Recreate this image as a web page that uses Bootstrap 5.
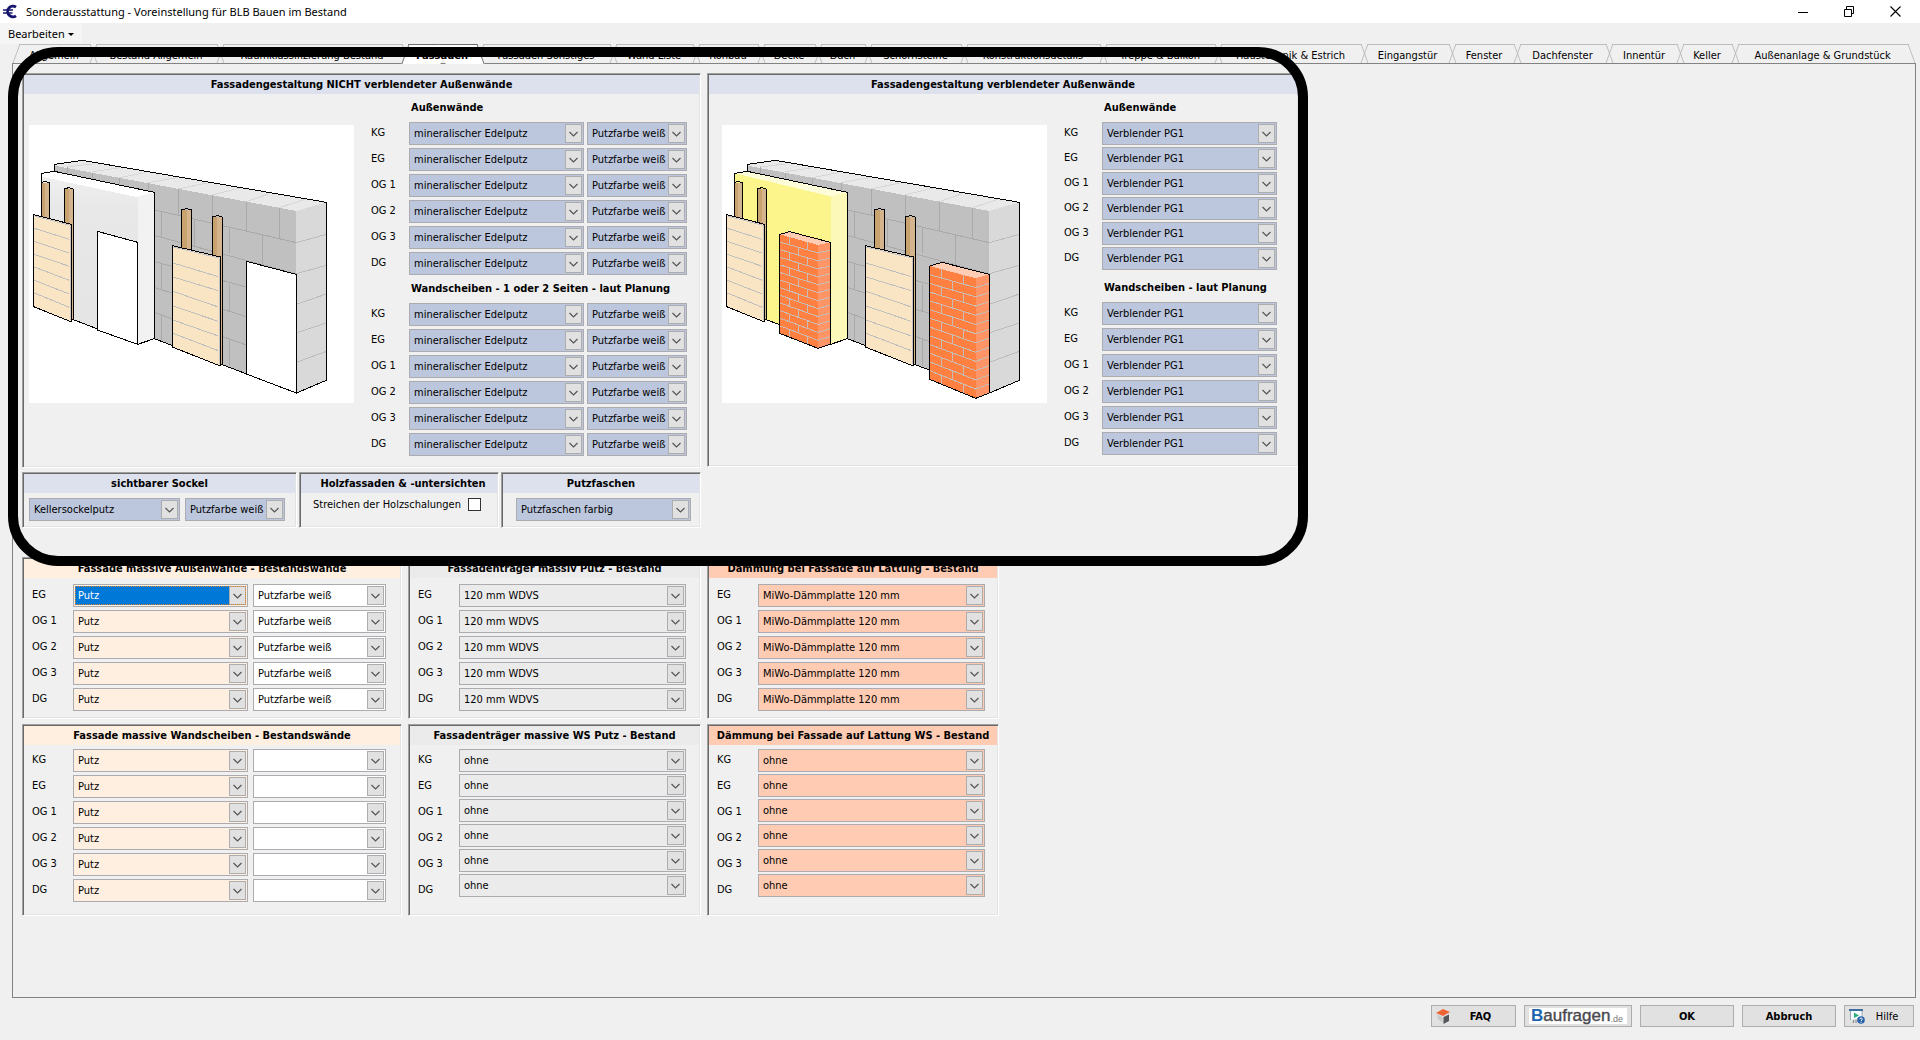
<!DOCTYPE html>
<html lang="de">
<head>
<meta charset="utf-8">
<meta name="viewport" content="width=device-width, initial-scale=1">
<title>Sonderausstattung - Voreinstellung für BLB Bauen im Bestand</title>
<link href="https://cdn.jsdelivr.net/npm/bootstrap@5.3.0/dist/css/bootstrap.min.css" rel="stylesheet">
<style>
  body { background: #f0f0f0; color: #000; font-family: "DejaVu Sans Condensed", "DejaVu Sans", sans-serif; font-size: 11px; line-height: 15px; }
  button, select, input { font: inherit; color: inherit; }
  .titlebar { height: 23px; background: #fff; font-family: "Noto Sans", sans-serif; padding: 0 2px 0 3px; }
  .win-btn { width: 46px; height: 23px; border: 0; background: none; padding: 0 0 3px; }
  .menubar { height: 21px; }
  .menu-btn { border: 0; background: #f5f5f5; height: 21px; padding: 0 8px; font-family: "Noto Sans", sans-serif; }
  .menu-btn::after { margin-left: 3px; border-width: 3px; vertical-align: 2px; }

  .tab-strip { display: grid; height: 19px; margin: 0 5px 0 20px;
    grid-template-columns: 77fr 127fr 185fr 75fr 133fr 83fr 65fr 57fr 50fr 96fr 139fr 115fr 146fr 88fr 65fr 92fr 71fr 55fr 176fr; }
  .tab-btn { position: relative; isolation: isolate; min-width: 0; border: 0; background: none; height: 19px; padding: 3px 9px 0 0; white-space: nowrap; display: flex; justify-content: center; align-items: center; }
  .tab-btn::before, .tab-btn::after { content: ""; position: absolute; z-index: -1; top: 0; bottom: 0; width: 52%; border: 0 solid #bdbdbd; border-top-width: 1px; }
  .tab-btn::before { left: -4px; border-left-width: 1px; transform: skewX(-20deg); }
  .tab-btn::after { right: 3px; border-right-width: 1px; transform: skewX(20deg); }
  .tab-btn.active { font-weight: bold; height: 20px; z-index: 1; }
  .tab-btn.active::before, .tab-btn.active::after { background: #fff; border-color: #6e6e6e; }

  .page-frame { border: 1px solid #838383; margin: 0 4px 0 12px; padding: 9px; }
  .group-box { border: 1px solid; border-color: #a0a0a0 #fff #fff #a0a0a0; box-shadow: inset 1px 1px #696969, inset -1px -1px #e3e3e3; padding: 1px; min-width: 0; }
  .group-head { font-size: 11px; font-weight: bold; line-height: 19px; text-align: center; margin: 0; white-space: nowrap; }
  .sub-head { font-size: 11px; font-weight: bold; line-height: 28px; margin: 0; padding-left: 2px; white-space: nowrap; }
  .head-blue { background: #dce1ed; }
  .head-peach { background: #ffefe1; }
  .head-grey { background: #ebebeb; }
  .head-salmon { background: #ffcbb3; }

  .stack { display: flex; flex-direction: column; gap: 3px; }
  .stack.tight { gap: 2px; }
  .stack label { height: 23px; line-height: 21px; white-space: nowrap; }
  .combo { display: block; appearance: none; height: 23px; border: 1px solid #ababb0; border-radius: 0; padding: 0 18px 0 4px; background-color: #fff; background-repeat: no-repeat; background-position: right 1px top 1px;
    background-image: url("data:image/svg+xml,%3Csvg xmlns='http://www.w3.org/2000/svg' width='17' height='19'%3E%3Crect x='.5' y='.5' width='16' height='18' fill='%23e1e1e1' stroke='%23adadad'/%3E%3Cpath d='M4.5 8l4 4 4-4' fill='none' stroke='%23555' stroke-width='1.2'/%3E%3C/svg%3E"); }
  .c-blue { background-color: #bcc7dd; }
  .c-peach { background-color: #ffefe1; }
  .c-grey { background-color: #ebebeb; }
  .c-salmon { background-color: #ffcbb3; }
  .combo.picked { color: #fff; background-color: #0078d7; box-shadow: inset 0 0 0 1px #ffefe1; outline: 1px dotted #d8842a; outline-offset: -3px; }
  .combo option { color: #000; background: #fff; }
  .w-base { width: 151px; }
  .w-main { width: 175px; }
  .w-sub { width: 100px; }
  .w-col { width: 133px; }
  .w-wide { width: 227px; }
  .lab-col { width: 41px; }
  .lab-col.narrow { width: 38px; }
  .pair { display: flex; gap: 5px; }
  .pair.close-set { gap: 3px; }
  .tick { appearance: none; width: 13px; height: 13px; border: 1px solid #333; background: #fff; margin: 0; }
  .tick:checked { background: #333; }

  .col-a { width: 380px; }
  .col-b { width: 293px; }
  .col-c { width: 292px; }
  .left-part { width: 679px; }
  .right-part { width: 592px; margin: 0 0 61px 6px; }
  .box-row { display: flex; gap: 6px; }
  .upper-row { margin-top: 29px; }
  .lower-row { margin-top: 5px; }
  .small-row { display: flex; gap: 2px; margin-top: 4px; }
  .box-sockel { width: 275px; }
  .box-holz { width: 200px; }
  .small-body { padding: 5px; }
  .upper-body { padding: 6px 8px; }
  .wall-body { padding: 0 0 10px 5px; }
  .brick-body { padding-left: 13px; }
  .wall-pic { width: 325px; height: 278px; background: #fff; display: block; margin: 31px 17px 0 0; }

  .marker { position: absolute; left: 8px; top: 47px; width: 1300px; height: 519px; border: 10px solid #000; border-radius: 50px; pointer-events: none; z-index: 5; }

  .foot { padding: 7px 6px 13px; gap: 8px; }
  .foot-btn { height: 22px; border: 1px solid #adadad; background: #e1e1e1; padding: 0 4px; display: flex; align-items: center; justify-content: center; text-decoration: none; color: #000; }
  .b-94 { width: 94px; }
  .b-85 { width: 85px; }
  .b-70 { width: 70px; }
  .b-108 { width: 108px; }
  .brand-mark { background: #fff; width: 100px; height: 16px; display: flex; align-items: center; padding-left: 2px; font-family: "Liberation Sans", sans-serif; font-size: 17px; line-height: 20px; color: #4a4a50; -webkit-text-stroke: .4px #4a4a50; white-space: nowrap; }
  .brand-mark b { font-weight: bold; color: #1c63b0; -webkit-text-stroke: 0; }
  .brand-mark i { font-style: normal; font-size: 9px; line-height: 12px; padding-top: 5px; color: #777; -webkit-text-stroke: 0; }
</style>
<script src="https://cdn.jsdelivr.net/npm/bootstrap@5.3.0/dist/js/bootstrap.bundle.min.js"></script>
</head>
<body class="d-flex flex-column min-vh-100">

<header>
  <div class="titlebar d-flex align-items-center">
    <svg width="15" height="15" viewBox="0 0 15 15" aria-hidden="true"><path d="M13 3.2A5.3 5.3 0 1 0 13 11.8" fill="none" stroke="#15156e" stroke-width="2.8"/><path d="M0 6h10M0 9h9.5" stroke="#15156e" stroke-width="1.6"/></svg>
    <span class="ms-1 ps-1 flex-grow-1">Sonderausstattung - Voreinstellung für BLB Bauen im Bestand</span>
    <button class="win-btn" aria-label="Minimieren"><svg width="10" height="10"><path d="M0 5.5h10" stroke="#000"/></svg></button>
    <button class="win-btn" aria-label="Wiederherstellen"><svg width="10" height="11"><path d="M.5 3.5h7v7h-7zM2.500 3V.5h7v7H8" fill="none" stroke="#000"/></svg></button>
    <button class="win-btn" aria-label="Schließen"><svg width="11" height="11"><path d="M.5 .5l10 10M10.500 .5l-10 10" stroke="#000" stroke-width="1.1"/></svg></button>
  </div>
  <div class="menubar"><button class="menu-btn dropdown-toggle">Bearbeiten</button></div>
</header>

<nav class="tab-strip" role="tablist">
  <button class="tab-btn" role="tab">Allgemein</button>
  <button class="tab-btn" role="tab">Bestand Allgemein</button>
  <button class="tab-btn" role="tab">Raumklassifizierung Bestand</button>
  <button class="tab-btn active" role="tab" aria-selected="true">Fassaden</button>
  <button class="tab-btn" role="tab">Fassaden Sonstiges</button>
  <button class="tab-btn" role="tab">Wand Liste</button>
  <button class="tab-btn" role="tab">Rohbau</button>
  <button class="tab-btn" role="tab">Decke</button>
  <button class="tab-btn" role="tab">Dach</button>
  <button class="tab-btn" role="tab">Schornsteine</button>
  <button class="tab-btn" role="tab">Konstruktionsdetails</button>
  <button class="tab-btn" role="tab">Treppe &amp; Balkon</button>
  <button class="tab-btn" role="tab">Haustechnik &amp; Estrich</button>
  <button class="tab-btn" role="tab">Eingangstür</button>
  <button class="tab-btn" role="tab">Fenster</button>
  <button class="tab-btn" role="tab">Dachfenster</button>
  <button class="tab-btn" role="tab">Innentür</button>
  <button class="tab-btn" role="tab">Keller</button>
  <button class="tab-btn" role="tab">Außenanlage &amp; Grundstück</button>
</nav>

<main class="page-frame flex-grow-1">
  <div class="d-flex">
    <div class="left-part d-flex flex-column">
      <section class="group-box flex-grow-1">
        <h2 class="group-head head-blue">Fassadengestaltung NICHT verblendeter Außenwände</h2>
        <div class="d-flex wall-body">
          <svg class="wall-pic" viewBox="57 45 975 834" shape-rendering="crispEdges" role="img" aria-label="Wandaufbau Putzfassade">
            <defs>
              <g id="wall" stroke-width="3" fill="none">
                <path d="M133 163L217 151L949 277L859 303L133 167z" fill="#e9e9e9"/>
                <path d="M133 167L859 303V849L433 686V300L133 200z" fill="#c0c0c0"/>
                <path d="M859 303L949 277V811L859 849z" fill="#d9d9d9"/>
                <path d="M172 171L245 162M247 185L330 173M328 203L405 188M415 218L500 203M505 237L590 219M607 255L690 234M709 275L775 252M808 293L885 268" stroke="#d6d6d6"/>
                <path d="M859 398L949 373M859 491L949 466M859 583L949 552M859 669L949 639M859 757L949 724" stroke="#bcbcbc"/>
                <path d="M435 300L859 398M435 377L859 492M435 455L859 573M435 533L709 620M435 608L709 705M172 172V192M247 188V207M328 204V222M415 218V240M505 238V317M607 257V341M709 275V364M808 295V386M454 305V382M553 328V410M658 352V430M757 375V467M454 460V538M658 523V602M454 615V690M658 685V768" stroke="#a9a9a9"/>
                <path d="M133 185V163L217 151L949 277V811L859 849L433 686" stroke="#000"/>
              </g>
              <g id="wood" stroke-width="3" fill="none">
                <path d="M93 218h12v106h-12zM163 237h14v103h-14zM514 300h16v115h-16zM607 321h15v117h-15z" fill="#c8a36f"/>
                <path d="M105 218h13v108h-13zM177 237h13v390h-5V345h-8zM530 300h15v120h-15zM622 321h15v440h-5V440h-10z" fill="#d3b48c"/>
                <path d="M93 325V218L105 214L118 218V326M163 340V237L176 233L190 237V628M514 415V300L530 296L545 300V420M607 437V321L622 317L637 321V762" stroke="#000"/>
                <path d="M71 314L185 343V634H180L71 590zM487 407L632 441V766H626L487 711z" fill="#f9e4c3" stroke="#000"/>
                <path d="M74 318L180 346V630M490 411L627 444V763" stroke="#c4c4c8"/>
                <path d="M73 355L178 388M73 394L178 429M73 433L178 469M73 471L178 511M73 511L178 552M73 549L178 592M489 459L625 500M489 501L625 542M489 544L625 591M489 588L625 634M489 630L625 678M489 670L625 722" stroke="#bfbfbf"/>
              </g>
              <linearGradient id="soft" x1="0" y1="0" x2="0" y2="1"><stop offset="0" stop-color="#f0f0f0"/><stop offset=".2" stop-color="#e8e8e8"/><stop offset="1" stop-color="#e4e4e4"/></linearGradient>
            </defs>
            <use href="#wall"/>
            <g stroke-width="3" fill="none">
              <path d="M95 190L133 184L433 247L383 259z" fill="#fff"/>
              <path d="M95 190L383 259V703L95 590z" fill="url(#soft)"/>
              <path d="M95 190L383 250V262L95 200z" fill="#fff"/>
              <path d="M383 259L433 247V686L383 703z" fill="#f2f2f2"/>
              <path d="M95 215V190L133 184L433 247V686L383 703L185 627" stroke="#000"/>
              <path d="M262 364L383 397V703L262 660zM709 454L859 493V849L709 792z" fill="#fff" stroke="#000"/>
            </g>
            <use href="#wood"/>
          </svg>
          <div class="lab-col narrow">
            <div class="sub-head">&nbsp;</div>
            <div class="stack" data-labels="a1"></div>
            <div class="sub-head">&nbsp;</div>
            <div class="stack" data-labels="a2"></div>
          </div>
          <div>
            <h3 class="sub-head">Außenwände</h3>
            <div class="stack" data-rows="a1"></div>
            <h3 class="sub-head">Wandscheiben - 1 oder 2 Seiten - laut Planung</h3>
            <div class="stack" data-rows="a2"></div>
          </div>
        </div>
      </section>
      <div class="small-row">
        <section class="group-box box-sockel">
          <h2 class="group-head head-blue">sichtbarer Sockel</h2>
          <div class="small-body pair">
            <select class="combo c-blue w-base" aria-label="Sockel Material"><option>Kellersockelputz</option></select>
            <select class="combo c-blue w-sub" aria-label="Sockel Farbe"><option>Putzfarbe weiß</option></select>
          </div>
        </section>
        <section class="group-box box-holz">
          <h2 class="group-head head-blue ps-2">Holzfassaden &amp; -untersichten</h2>
          <div class="d-flex align-items-center justify-content-between ps-2 ms-1 pe-3 pt-1"><label for="holz">Streichen der Holzschalungen</label><input class="tick" type="checkbox" id="holz"></div>
        </section>
        <section class="group-box flex-grow-1">
          <h2 class="group-head head-blue">Putzfaschen</h2>
          <div class="small-body ms-2"><select class="combo c-blue w-main" aria-label="Putzfaschen"><option>Putzfaschen farbig</option></select></div>
        </section>
      </div>
    </div>

    <section class="group-box right-part">
      <h2 class="group-head head-blue">Fassadengestaltung verblendeter Außenwände</h2>
      <div class="d-flex brick-body">
        <svg class="wall-pic" viewBox="57 45 975 834" shape-rendering="crispEdges" role="img" aria-label="Wandaufbau Verblendfassade">
          <use href="#wall"/>
          <g stroke-width="3" fill="none">
            <path d="M95 190L133 184L433 247L383 259z" fill="#fefdd9"/>
            <path d="M95 190L383 259V703L95 590z" fill="#fcf58b"/>
            <path d="M383 259L433 247V686L383 703z" fill="#fcf8b8"/>
            <path d="M95 215V190L133 184L433 247V686L383 703L185 627" stroke="#000"/>
          </g>
          <use href="#wood"/>
          <g id="bricks" stroke-width="3" fill="none"></g>
        </svg>
        <div class="lab-col narrow">
          <div class="sub-head">&nbsp;</div>
          <div class="stack tight" data-labels="b1"></div>
          <div class="sub-head pt-1">&nbsp;</div>
          <div class="stack" data-labels="b2"></div>
        </div>
        <div>
          <h3 class="sub-head">Außenwände</h3>
          <div class="stack tight" data-rows="b1"></div>
          <h3 class="sub-head pt-1">Wandscheiben - laut Planung</h3>
          <div class="stack" data-rows="b2"></div>
        </div>
      </div>
    </section>
  </div>

  <div class="box-row upper-row">
    <section class="group-box col-a">
      <h2 class="group-head head-peach">Fassade massive Außenwände - Bestandswände</h2>
      <div class="d-flex upper-body"><div class="lab-col stack" data-labels="c1"></div><div class="stack" data-rows="c1"></div></div>
    </section>
    <section class="group-box col-b">
      <h2 class="group-head head-grey">Fassadenträger massiv Putz - Bestand</h2>
      <div class="d-flex upper-body"><div class="lab-col stack" data-labels="d1"></div><div class="stack" data-rows="d1"></div></div>
    </section>
    <section class="group-box col-c">
      <h2 class="group-head head-salmon">Dämmung bei Fassade auf Lattung - Bestand</h2>
      <div class="d-flex upper-body"><div class="lab-col stack" data-labels="e1"></div><div class="stack" data-rows="e1"></div></div>
    </section>
  </div>

  <div class="box-row lower-row">
    <section class="group-box col-a">
      <h2 class="group-head head-peach">Fassade massive Wandscheiben - Bestandswände</h2>
      <div class="d-flex px-2 pt-1 pb-2 mb-1"><div class="lab-col stack" data-labels="c2"></div><div class="stack" data-rows="c2"></div></div>
    </section>
    <section class="group-box col-b">
      <h2 class="group-head head-grey">Fassadenträger massive WS Putz - Bestand</h2>
      <div class="d-flex px-2 pt-1 pb-2 mb-1"><div class="lab-col stack" data-labels="d2"></div><div class="stack tight" data-rows="d2"></div></div>
    </section>
    <section class="group-box col-c">
      <h2 class="group-head head-salmon">Dämmung bei Fassade auf Lattung WS - Bestand</h2>
      <div class="d-flex px-2 pt-1 pb-2 mb-1"><div class="lab-col stack" data-labels="e2"></div><div class="stack tight" data-rows="e2"></div></div>
    </section>
  </div>
</main>

<footer class="foot d-flex justify-content-end">
  <button class="foot-btn b-85 fw-bold">
    <svg width="14" height="15" viewBox="0 0 14 15" aria-hidden="true"><path d="M0 4L7 0L14 3L7 7z" fill="#ee6432"/><path d="M1 5.500L6.500 8V14L2 10z" fill="#c9c9c9"/><path d="M7.500 8L13 5.500V12L7.500 15z" fill="#55565a"/></svg>
    <span class="flex-grow-1">FAQ</span>
  </button>
  <a class="foot-btn b-108" href="#"><span class="brand-mark"><b>B</b>aufragen<i>.de</i></span></a>
  <button class="foot-btn b-94 fw-bold">OK</button>
  <button class="foot-btn b-94 fw-bold">Abbruch</button>
  <button class="foot-btn b-70">
    <svg width="16" height="15" viewBox="0 0 16 15" aria-hidden="true"><path d="M1.500 11V1.500H13V8" fill="#f8fbfd" stroke="#9aa9b5"/><path d="M0 1h14" stroke="#3f6f9c" stroke-width="2"/><path d="M5 3.500L10 6.500L5 9z" fill="#2fae7c"/><path d="M4 14l1-3M7 14v-3" stroke="#777"/><circle cx="12" cy="11" r="3.800" fill="#2562a8"/><path d="M10.800 10.200c0-1.600 2.500-1.600 2.500 0 0 .8-1.200.8-1.200 1.800M12 12.800v1" stroke="#fff" fill="none"/></svg>
    <span class="flex-grow-1">Hilfe</span>
  </button>
</footer>

<div class="marker" aria-hidden="true"></div>

<script>
  // Each block: floors, then its columns of drop-downs (value, colour class, width class).
  const all = ['KG', 'EG', 'OG 1', 'OG 2', 'OG 3', 'DG'], upper = all.slice(1);
  const putz = [['mineralischer Edelputz', 'c-blue', 'w-main'], ['Putzfarbe weiß', 'c-blue', 'w-sub']];
  const blocks = {
    a1: [all, putz], a2: [all, putz],
    b1: [all, [['Verblender PG1', 'c-blue', 'w-main']]], b2: [all, [['Verblender PG1', 'c-blue', 'w-main']]],
    c1: [upper, [['Putz', 'c-peach', 'w-main'], ['Putzfarbe weiß', '', 'w-col']]],
    d1: [upper, [['120 mm WDVS', 'c-grey', 'w-wide']]],
    e1: [upper, [['MiWo-Dämmplatte 120 mm', 'c-salmon', 'w-wide']]],
    c2: [all, [['Putz', 'c-peach', 'w-main'], ['', '', 'w-col']]],
    d2: [all, [['ohne', 'c-grey', 'w-wide']]],
    e2: [all, [['ohne', 'c-salmon', 'w-wide']]]
  };
  for (const [key, [floors, cols]] of Object.entries(blocks)) {
    document.querySelector(`[data-labels=${key}]`).innerHTML =
      floors.map((f, i) => `<label for="${key}-${i}">${f}</label>`).join('');
    const pair = key[0] === 'a' ? 'pair close-set' : 'pair';
    document.querySelector(`[data-rows=${key}]`).innerHTML = floors.map((f, i) =>
      `<div class="${pair}">` + cols.map(([v, c, w], n) =>
        `<select class="combo ${c} ${w}" ${n ? `aria-label="${f} Farbe"` : `id="${key}-${i}"`}><option>${v}</option></select>`).join('') + '</div>').join('');
  }
  document.getElementById('c1-0').classList.add('picked');

  // Brick piers: x0/x1 front edges, x2 side edge, tops and bottoms of the front edges.
  function pier(x0, x1, x2, xt, t0, t1, t2, tt, b0, b1, b2) {
    const n = 13;
    let s = `<path d="M${x0} ${t0}L${x1} ${t1}V${b1}L${x0} ${b0}z" fill="#ff8040"/>` +
      `<path d="M${x1} ${t1}L${x2} ${t2}V${b2}L${x1} ${b1}z" fill="#ff9466"/>` +
      `<path d="M${x0} ${t0}L${xt} ${tt}L${x2} ${t2}L${x1} ${t1}z" fill="#ffccb4"/>`;
    let d = '';
    for (let k = 0; k < n; k++) {
      const l = t0 + (b0 - t0) * k / n, r = t1 + (b1 - t1) * k / n, q = t2 + (b2 - t2) * k / n;
      if (k) d += `M${x0} ${l}L${x1} ${r}L${x2} ${q}`;
      for (const f of k % 2 ? [.5] : [.25, .73]) {
        const y = l + (r - l) * f;
        d += `M${x0 + (x1 - x0) * f} ${y}v${(b0 - t0) / n}`;
      }
    }
    return s + `<path d="${d}" stroke="#c9bdb6"/>` +
      `<path d="M${x0} ${b0}V${t0}L${xt} ${tt}L${x2} ${t2}V${b2}L${x1} ${b1}z" stroke="#000"/>`;
  }
  document.getElementById('bricks').innerHTML =
    pier(230, 345, 382, 260, 373, 405, 397, 365, 670, 715, 703) +
    pier(680, 818, 859, 717, 468, 505, 493, 457, 808, 865, 849);
</script>
</body>
</html>
